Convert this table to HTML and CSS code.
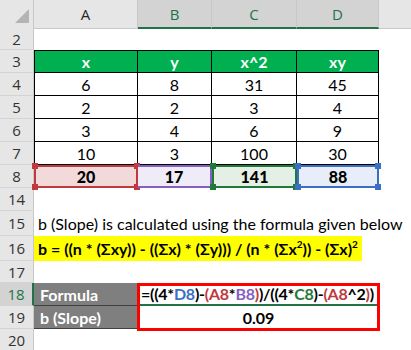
FILE: index.html
```html
<!DOCTYPE html>
<html>
<head>
<meta charset="utf-8">
<link rel="stylesheet" href="styles.css">
</head>
<body>
<div class="sheet">
  <div class="row hdr-row">
    <div class="corner"><svg width="34" height="28"><polygon points="29,9 29,23 15,23" fill="#b4b4b4"/></svg></div>
    <div class="colh">A</div>
    <div class="colh sel">B</div>
    <div class="colh sel">C</div>
    <div class="colh sel">D</div>
    <div class="colh blank"></div>
  </div>

  <div class="row r22"><div class="rowh">2</div></div>

  <div class="row r23">
    <div class="rowh">3</div>
    <div class="c th bl">x</div><div class="c th">y</div><div class="c th">x^2</div><div class="c th">xy</div>
  </div>
  <div class="row r23">
    <div class="rowh">4</div>
    <div class="c td bl">6</div><div class="c td">8</div><div class="c td">31</div><div class="c td">45</div>
  </div>
  <div class="row r23">
    <div class="rowh">5</div>
    <div class="c td bl">2</div><div class="c td">2</div><div class="c td">3</div><div class="c td">4</div>
  </div>
  <div class="row r23">
    <div class="rowh">6</div>
    <div class="c td bl">3</div><div class="c td">4</div><div class="c td">6</div><div class="c td">9</div>
  </div>
  <div class="row r23">
    <div class="rowh">7</div>
    <div class="c td bl">10</div><div class="c td">3</div><div class="c td">100</div><div class="c td">30</div>
  </div>
  <div class="row r23">
    <div class="rowh">8</div>
    <div class="c sum ref-a"><b>20</b><i class="h tl"></i><i class="h tr"></i><i class="h bl2"></i><i class="h br"></i></div>
    <div class="c sum ref-b"><b>17</b></div>
    <div class="c sum ref-c"><b>141</b><i class="h tl"></i><i class="h tr"></i><i class="h bl2"></i><i class="h br"></i></div>
    <div class="c sum ref-d"><b>88</b><i class="h tl"></i><i class="h tr"></i><i class="h bl2"></i><i class="h br"></i></div>
  </div>

  <div class="row r23"><div class="rowh">14</div></div>
  <div class="row r25">
    <div class="rowh">15</div>
    <div class="text">b (Slope) is calculated using the formula given below</div>
  </div>
  <div class="row r25">
    <div class="rowh">16</div>
    <div class="text"><span class="hl">b = ((n * (Σxy)) - ((Σx) * (Σy))) / (n * (Σx<sup>2</sup>)) - (Σx)<sup>2</sup></span></div>
  </div>
  <div class="row r22"><div class="rowh">17</div></div>

  <div class="result">
    <div class="row r23">
      <div class="rowh sel">18</div>
      <div class="c label">Formula</div>
      <div class="c formula"><span class="k">=</span><span class="p1">(</span><span class="k">(</span>4*<span class="rd">D8</span>)-<span class="p2">(</span><span class="ra">A8</span>*<span class="rb">B8</span><span class="p2">)</span><span class="p1">)</span>/<span class="p1">(</span>(4*<span class="rc">C8</span>)-<span class="p2">(</span><span class="ra">A8</span>^2<span class="p2">)</span><span class="p1">)</span></div>
    </div>
    <div class="row r23">
      <div class="rowh">19</div>
      <div class="c label">b (Slope)</div>
      <div class="c value">0.09</div>
    </div>
    <div class="redbox"></div>
  </div>
  <div class="row r22"><div class="rowh">20</div></div>
</div>
</body>
</html>
```

FILE: styles.css
```css
html, body { margin: 0; padding: 0; background: #fff; }
body { width: 411px; height: 350px; overflow: hidden; font-family: Lato, "Open Sans", sans-serif; color: #000; }

.sheet { display: flex; flex-direction: column; }

.row {
  display: grid;
  grid-template-columns: 34px 104px 74px 85px 82px 1fr;
  box-sizing: border-box;
}
.hdr-row { height: 28px; background: #e6e6e6; }
.r22 { height: 22px; }
.r23 { height: 23px; }
.r25 { height: 25px; }

.corner { border-right: 1px solid #c8c8c8; border-bottom: 1px solid #c8c8c8; box-sizing: border-box; }
.corner svg { display: block; }

.colh {
  display: flex; align-items: center; justify-content: center;
  font-family: "Open Sans", sans-serif; font-size: 15px; color: #262626;
  border-right: 1px solid #c8c8c8; border-bottom: 1px solid #c8c8c8;
  box-sizing: border-box;
}
.colh.sel { background: #d3d3d3; color: #217346; border-bottom: 2px solid #217346; }
.colh.blank { border-right: none; }

.rowh {
  grid-column: 1;
  display: flex; align-items: center; justify-content: center;
  background: #e6e6e6; color: #333;
  font-family: "Open Sans", sans-serif; font-size: 15px;
  border-right: 1px solid #c8c8c8; border-bottom: 1px solid #d4d4d4;
  box-sizing: border-box;
}
.rowh.sel { background: #d3d3d3; color: #217346; border-right: 2px solid #217346; }

.c {
  display: flex; align-items: center; justify-content: center;
  box-sizing: border-box; font-size: 16px; position: relative;
}
.th { background: #00b050; color: #fff; font-weight: bold; border-right: 1px solid #000; border-bottom: 1px solid #000; border-top: 1px solid #000; }
.td { border-right: 1px solid #000; border-bottom: 1px solid #000; }
.bl { border-left: 1px solid #000; }

.sum { border: 2px solid; }
.sum b { font-weight: 900; }
.ref-a { background: #f2d9da; border-color: #c0393f; }
.ref-b { background: #efecf8; border-color: #8460c4; border-left: none; }
.ref-c { background: #e4efe5; border-color: #1e7a36; }
.ref-d { background: #e7eef9; border-color: #3b6fc6; }

.h { position: absolute; width: 6px; height: 6px; background: inherit; }
.ref-a .h { background: #c0393f; }
.ref-c .h { background: #1e7a36; }
.ref-d .h { background: #3b6fc6; }
.h.tl { left: -4px; top: -4px; }
.h.tr { right: -4px; top: -4px; }
.h.bl2 { left: -4px; bottom: -4px; }
.h.br { right: -4px; bottom: -4px; }

.text {
  grid-column: 2 / -1;
  display: flex; align-items: center;
  font-size: 16px; white-space: nowrap;
}
.text:not(:has(.hl)) { padding-left: 4px; }
.hl {
  background: #ffff00; font-weight: bold; height: 100%;
  display: flex; align-items: center; padding: 0 4px; box-sizing: border-box;
}
.hl sup { font-size: 10px; line-height: 0; position: relative; top: -5px; vertical-align: baseline; }

.result { position: relative; }
.label { background: #7f7f7f; color: #fff; font-weight: bold; justify-content: flex-start; padding-left: 6px; border-bottom: 1px solid #404040; }
.formula, .value { grid-column: 3 / 6; font-weight: bold; }
.formula { justify-content: flex-start; padding-left: 3px; border-bottom: 2px solid #217346; font-size: 16px; letter-spacing: -0.25px; white-space: nowrap; }
.value { font-size: 16px; }

.k { color: #000; }
.p1 { color: #000; }
.p2 { color: #c0393f; }
.ra { color: #c0393f; }
.rb { color: #8460c4; }
.rc { color: #1e7a36; }
.rd { color: #3b6fc6; }

.redbox {
  position: absolute; left: 137px; top: 0; width: 243px; height: 48px;
  border: 3px solid #ff0000; box-sizing: border-box; pointer-events: none;
}
```
